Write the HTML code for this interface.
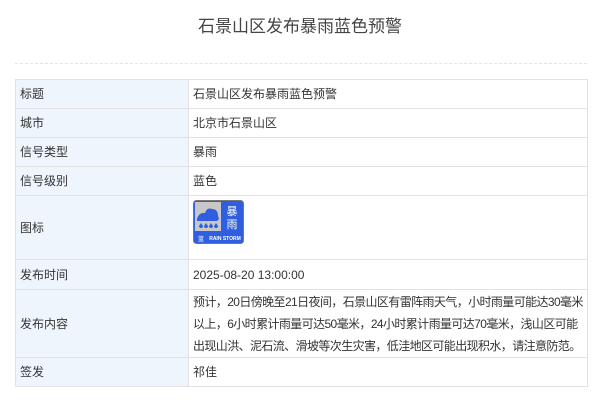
<!DOCTYPE html>
<html><head><meta charset="utf-8"><style>
body{margin:0;background:#fff;font-family:"Liberation Sans","Noto Sans CJK SC",sans-serif;color:#333;width:600px;height:415px;overflow:hidden;position:relative}
h1{position:absolute;top:16px;left:0;width:600px;text-align:center;margin:0;font-size:17px;font-weight:normal;color:#444;line-height:22px}
.dash{position:absolute;top:63px;left:15px;width:572px;border-top:1px dashed #e3e3e3}
table{position:absolute;top:79px;left:15px;width:573px;border-collapse:collapse;font-size:12px;table-layout:fixed}
td{border:1px solid #e2e2e2;padding:0 4px;line-height:22px}
td.l{background:#eff5fc;width:164px}
</style></head><body>
<h1>石景山区发布暴雨蓝色预警</h1>
<div class="dash"></div>
<table>
<tr style="height:29px"><td class="l">标题</td><td>石景山区发布暴雨蓝色预警</td></tr>
<tr style="height:29px"><td class="l">城市</td><td>北京市石景山区</td></tr>
<tr style="height:29px"><td class="l">信号类型</td><td>暴雨</td></tr>
<tr style="height:29px"><td class="l">信号级别</td><td>蓝色</td></tr>
<tr style="height:64px"><td class="l">图标</td><td style="vertical-align:top;padding-top:4px">
<svg width="51" height="44" viewBox="0 0 51 44">
<rect x="0.5" y="0.5" width="50" height="43" rx="3" fill="#2f5fe0" stroke="#777"/>
<rect x="2" y="2" width="26" height="29" fill="#c8c8c8"/>
<path d="M4 19 Q6 12 12 13 Q14 7 19 9 Q25 9 25 16 Q27 19 24 21 L4 21 Z" fill="#2f5fe0"/>
<path d="M8 23 l-2 3 a2 2 0 0 0 4 0 z M13 23 l-2 3 a2 2 0 0 0 4 0 z M18 23 l-2 3 a2 2 0 0 0 4 0 z M23 23 l-2 3 a2 2 0 0 0 4 0 z" fill="#2f5fe0"/>
<text x="39" y="15" font-size="11" fill="#fff" text-anchor="middle" font-family="Noto Sans CJK SC">暴</text>
<text x="39" y="28" font-size="11" fill="#fff" text-anchor="middle" font-family="Noto Sans CJK SC">雨</text>
<text x="8" y="41" font-size="6" fill="#fff" text-anchor="middle" font-family="Noto Sans CJK SC">蓝</text>
<text x="32" y="40" font-size="5" fill="#fff" text-anchor="middle" font-weight="bold">RAIN STORM</text>
</svg></td></tr>
<tr style="height:30px"><td class="l">发布时间</td><td>2025-08-20 13:00:00</td></tr>
<tr style="height:68px"><td class="l">发布内容</td><td style="letter-spacing:-0.6px;white-space:nowrap;overflow:hidden;padding-right:0">预计，20日傍晚至21日夜间，石景山区有雷阵雨天气，小时雨量可能达30毫米<br>以上，6小时累计雨量可达50毫米，24小时累计雨量可达70毫米，浅山区可能<br>出现山洪、泥石流、滑坡等次生灾害，低洼地区可能出现积水，请注意防范。</td></tr>
<tr style="height:29px"><td class="l">签发</td><td>祁佳</td></tr>
</table>
</body></html>
